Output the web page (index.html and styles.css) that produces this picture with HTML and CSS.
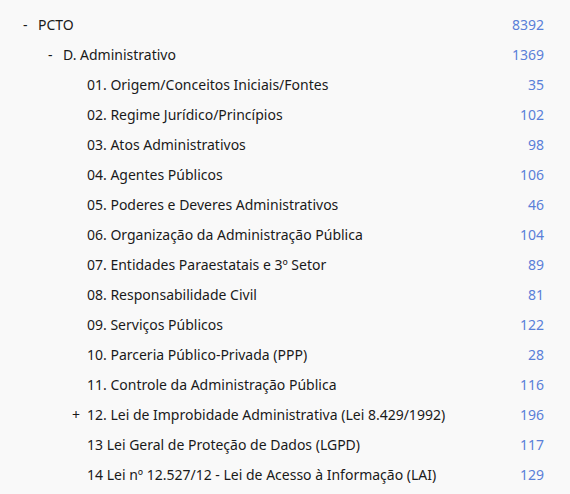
FILE: index.html
```html
<!DOCTYPE html>
<html lang="pt">
<head>
<meta charset="utf-8">
<link rel="stylesheet" href="styles.css">
</head>
<body>
<ul class="tree">
  <li class="row lvl0"><span class="sign">-</span><span class="label">PCTO</span><span class="count">8392</span></li>
  <li class="row lvl1"><span class="sign">-</span><span class="label">D. Administrativo</span><span class="count">1369</span></li>
  <li class="row lvl2"><span class="sign"></span><span class="label">01. Origem/Conceitos Iniciais/Fontes</span><span class="count">35</span></li>
  <li class="row lvl2"><span class="sign"></span><span class="label">02. Regime Jurídico/Princípios</span><span class="count">102</span></li>
  <li class="row lvl2"><span class="sign"></span><span class="label">03. Atos Administrativos</span><span class="count">98</span></li>
  <li class="row lvl2"><span class="sign"></span><span class="label">04. Agentes Públicos</span><span class="count">106</span></li>
  <li class="row lvl2"><span class="sign"></span><span class="label">05. Poderes e Deveres Administrativos</span><span class="count">46</span></li>
  <li class="row lvl2"><span class="sign"></span><span class="label">06. Organização da Administração Pública</span><span class="count">104</span></li>
  <li class="row lvl2"><span class="sign"></span><span class="label">07. Entidades Paraestatais e 3º Setor</span><span class="count">89</span></li>
  <li class="row lvl2"><span class="sign"></span><span class="label">08. Responsabilidade Civil</span><span class="count">81</span></li>
  <li class="row lvl2"><span class="sign"></span><span class="label">09. Serviços Públicos</span><span class="count">122</span></li>
  <li class="row lvl2"><span class="sign"></span><span class="label">10. Parceria Público-Privada (PPP)</span><span class="count">28</span></li>
  <li class="row lvl2"><span class="sign"></span><span class="label">11. Controle da Administração Pública</span><span class="count">116</span></li>
  <li class="row lvl2"><span class="sign">+</span><span class="label">12. Lei de Improbidade Administrativa (Lei 8.429/1992)</span><span class="count">196</span></li>
  <li class="row lvl2"><span class="sign"></span><span class="label">13 Lei Geral de Proteção de Dados (LGPD)</span><span class="count">117</span></li>
  <li class="row lvl2"><span class="sign"></span><span class="label">14 Lei nº 12.527/12 - Lei de Acesso à Informação (LAI)</span><span class="count">129</span></li>
</ul>
</body>
</html>
```

FILE: styles.css
```css
html, body {
  margin: 0;
  background: #f9f9f9;
}
body {
  font-family: "Noto Sans", "Open Sans", sans-serif;
  font-size: 14px;
  color: #1a1a1a;
}
.tree {
  list-style: none;
  margin: 0;
  padding: 9px 26px 0 0;
}
.row {
  display: flex;
  align-items: center;
  height: 30px;
}
.sign {
  width: 15px;
  flex: none;
  padding-left: 1px;
}
.lvl0 { padding-left: 22px; }
.lvl1 { padding-left: 47px; }
.lvl2 { padding-left: 71px; }
.label {
  flex: 1;
  white-space: nowrap;
}
.count {
  width: 60px;
  text-align: right;
  color: #5a7fd8;
}
```
